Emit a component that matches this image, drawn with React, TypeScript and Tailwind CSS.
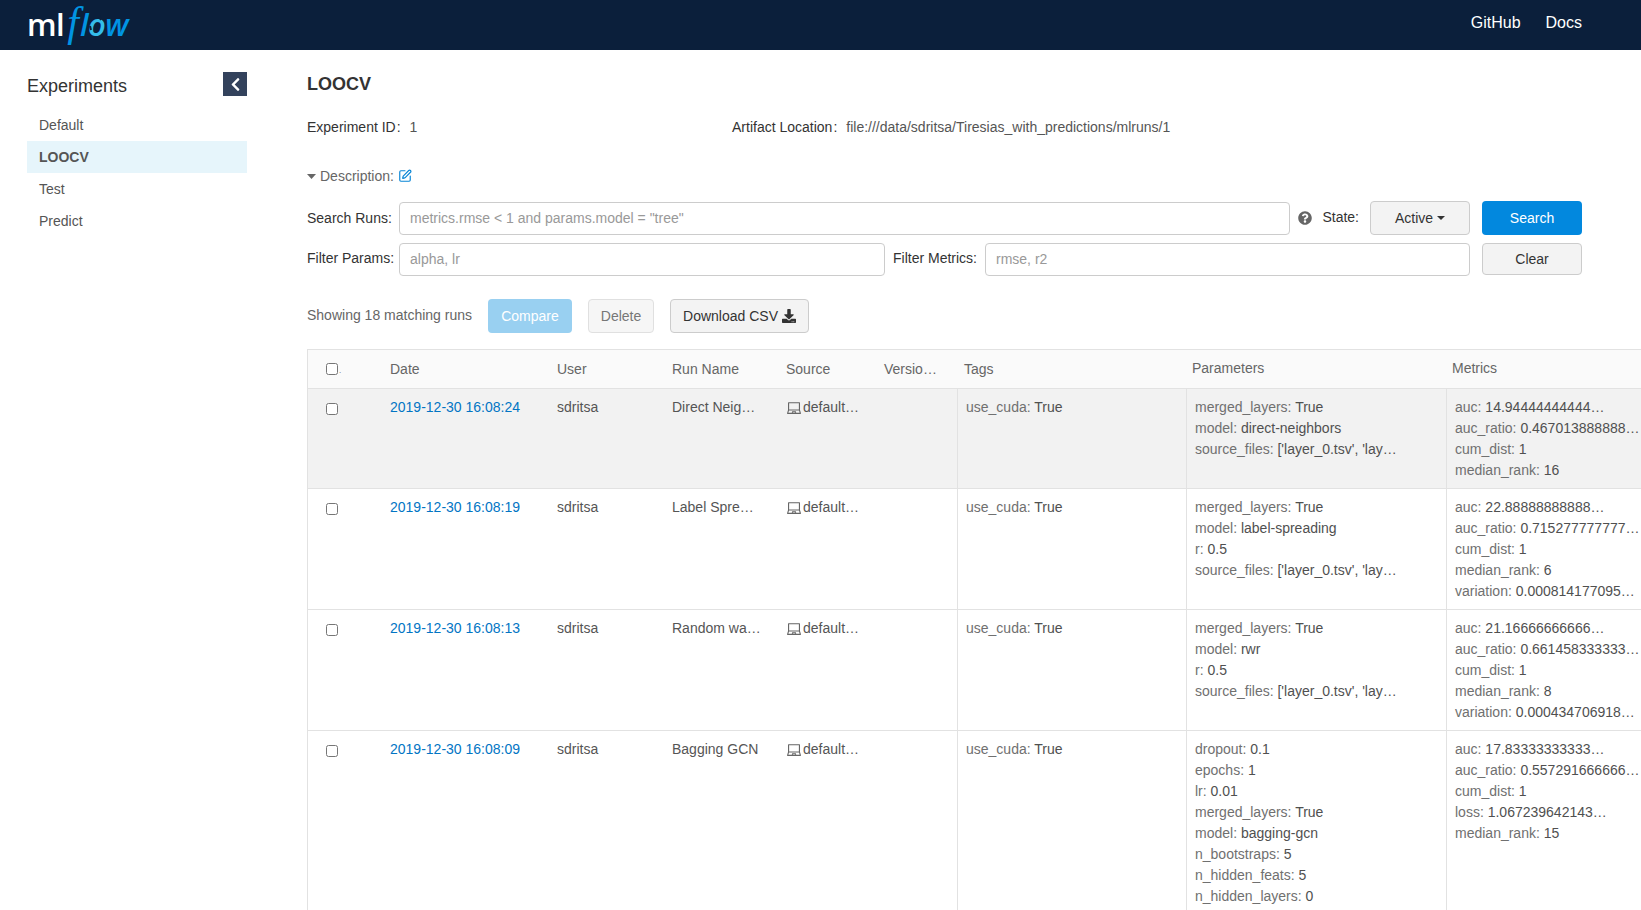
import React from "react";
import { FaChevronLeft, FaDownload, FaQuestionCircle } from "react-icons/fa";
import { AiOutlineLaptop } from "react-icons/ai";
import { SquarePen } from "lucide-react";

type Run = { date: string; name: string; params: [string, string][]; metrics: [string, string][]; hover?: boolean };

const files = "['layer_0.tsv', 'lay…";
const runs: Run[] = [
  {
    date: "2019-12-30 16:08:24",
    name: "Direct Neig…",
    hover: true,
    params: [["merged_layers", "True"], ["model", "direct-neighbors"], ["source_files", files]],
    metrics: [["auc", "14.94444444444…"], ["auc_ratio", "0.467013888888…"], ["cum_dist", "1"], ["median_rank", "16"]],
  },
  {
    date: "2019-12-30 16:08:19",
    name: "Label Spre…",
    params: [["merged_layers", "True"], ["model", "label-spreading"], ["r", "0.5"], ["source_files", files]],
    metrics: [["auc", "22.88888888888…"], ["auc_ratio", "0.715277777777…"], ["cum_dist", "1"], ["median_rank", "6"], ["variation", "0.000814177095…"]],
  },
  {
    date: "2019-12-30 16:08:13",
    name: "Random wa…",
    params: [["merged_layers", "True"], ["model", "rwr"], ["r", "0.5"], ["source_files", files]],
    metrics: [["auc", "21.16666666666…"], ["auc_ratio", "0.661458333333…"], ["cum_dist", "1"], ["median_rank", "8"], ["variation", "0.000434706918…"]],
  },
  {
    date: "2019-12-30 16:08:09",
    name: "Bagging GCN",
    params: [["dropout", "0.1"], ["epochs", "1"], ["lr", "0.01"], ["merged_layers", "True"], ["model", "bagging-gcn"], ["n_bootstraps", "5"], ["n_hidden_feats", "5"], ["n_hidden_layers", "0"]],
    metrics: [["auc", "17.83333333333…"], ["auc_ratio", "0.557291666666…"], ["cum_dist", "1"], ["loss", "1.067239642143…"], ["median_rank", "15"]],
  },
];

const GRID = "grid grid-cols-[74px_167px_115px_114px_98px_81px_229px_260px_1fr]";

function KV({ items }: { items: [string, string][] }) {
  return (
    <>
      {items.map(([k, v]) => (
        <div key={k} className="h-[21px] leading-[21px] whitespace-nowrap">
          <span className="text-[#707070]">{k}: </span>
          <span className="text-[#505050]">{v}</span>
        </div>
      ))}
    </>
  );
}

function Logo() {
  return (
    <div className="relative flex items-baseline h-[50px] w-[110px] font-['Open_Sans',sans-serif] select-none">
      <span className="text-white text-[31px] font-semibold leading-[44px] tracking-[-0.5px]">ml</span>
      <span className="text-[#0194e2] text-[42px] italic leading-[44px] font-['Liberation_Serif',serif] ml-[3px] mr-[1px]">f</span>
      <span className="text-[#0194e2] text-[31px] italic font-semibold leading-[44px] tracking-[-0.5px]">l</span>
      <span className="text-[#35bdea] text-[31px] italic font-semibold leading-[44px] tracking-[-0.5px]">o</span>
      <span className="text-[#0194e2] text-[31px] italic font-semibold leading-[44px] tracking-[-0.5px]">w</span>
      <svg width="20" height="20" viewBox="0 0 20 20" className="absolute left-[58px] top-[13px]">
        <path d="M14 3l2 4M5 13l1 4" stroke="#0b1f3b" strokeWidth="2" fill="none" />
      </svg>
    </div>
  );
}

export default function App() {
  return (
    <div className="w-[1641px] h-[910px] overflow-hidden bg-white text-[14px] font-['Liberation_Sans',Arial,sans-serif] flex flex-col">
      <header className="h-[50px] shrink-0 bg-[#0b1f3b] flex items-start justify-between pl-[27px] pr-[59px]">
        <Logo />
        <nav className="flex gap-[25px] text-white text-[16px] leading-[45px]">
          <span>GitHub</span>
          <span>Docs</span>
        </nav>
      </header>
      <div className="flex flex-1 min-h-0">
        <aside className="w-[220px] ml-[27px] shrink-0 text-[#555]">
          <div className="flex items-center justify-between mt-[22px] h-[24px]">
            <span className="text-[18px] text-[#333] mt-[4px]">Experiments</span>
            <span className="w-[24px] h-[24px] bg-[#33425c] flex items-center justify-center text-white">
              <FaChevronLeft size={15} />
            </span>
          </div>
          <ul className="mt-[13px]">
            <li className="h-[32px] leading-[32px] pl-[12px]">Default</li>
            <li className="h-[32px] leading-[32px] pl-[12px] bg-[#e6f5fb] font-bold">LOOCV</li>
            <li className="h-[32px] leading-[32px] pl-[12px]">Test</li>
            <li className="h-[32px] leading-[32px] pl-[12px]">Predict</li>
          </ul>
        </aside>
        <main className="flex-1 min-w-0 pl-[60px] overflow-hidden">
          <h1 className="mt-[23px] text-[18px] leading-[22px] font-bold text-[#333]">LOOCV</h1>
          <div className="mt-[22px] flex h-[20px] leading-[20px] text-[#333]">
            <div className="w-[425px]">
              Experiment ID<span className="ml-[1px]">:</span>
              <span className="ml-[9px] text-[#555]">1</span>
            </div>
            <div>
              Artifact Location<span className="ml-[1px]">:</span>
              <span className="ml-[9px] text-[#555]">file:///data/sdritsa/Tiresias_with_predictions/mlruns/1</span>
            </div>
          </div>
          <div className="mt-[29px] flex items-center h-[20px] text-[#666]">
            <svg width="9" height="5" viewBox="0 0 9 5" className="mr-[4px]">
              <path d="M0 0h9L4.500 5z" fill="#666" />
            </svg>
            <span>Description:</span>
            <SquarePen size={14} strokeWidth={2} className="ml-[4px] text-[#0a86d6]" />
          </div>

          <div className="w-[1275px] mt-[15px] flex items-center h-[34px]">
            <span className="w-[92px] shrink-0 text-[#333]">Search Runs:</span>
            <div className="flex-1 h-[33px] border border-[#ccc] rounded-[4px] px-[10px] leading-[31px] text-[#999]">
              metrics.rmse &lt; 1 and params.model = "tree"
            </div>
            <FaQuestionCircle size={14} className="ml-[8px] text-[#666]" />
            <span className="ml-[10px] text-[#333] mb-[2px]">State:</span>
            <button className="ml-[11px] w-[100px] h-[34px] border border-[#ccc] rounded-[4px] bg-[#f3f3f3] text-[#333] flex items-center justify-center">
              Active
              <svg width="8" height="4" viewBox="0 0 8 4" className="ml-[4px]">
                <path d="M0 0h8L4 4z" fill="#333" />
              </svg>
            </button>
            <button className="ml-[12px] w-[100px] h-[34px] rounded-[4px] bg-[#0288de] text-white">Search</button>
          </div>

          <div className="w-[1275px] mt-[8px] flex items-start">
            <span className="w-[92px] shrink-0 text-[#333] leading-[30px]">Filter Params:</span>
            <div className="w-[486px] h-[33px] border border-[#ccc] rounded-[4px] px-[10px] leading-[31px] text-[#999]">
              alpha, lr
            </div>
            <span className="w-[100px] pl-[8px] shrink-0 text-[#333] leading-[30px]">Filter Metrics:</span>
            <div className="w-[485px] h-[33px] border border-[#ccc] rounded-[4px] px-[10px] leading-[31px] text-[#999]">
              rmse, r2
            </div>
            <button className="ml-[12px] w-[100px] h-[32px] border border-[#ccc] rounded-[4px] bg-[#f3f3f3] text-[#333]">Clear</button>
          </div>

          <div className="mt-[23px] flex items-center h-[34px]">
            <span className="w-[181px] text-[#666] mb-[2px]">Showing 18 matching runs</span>
            <button className="w-[84px] h-[34px] rounded-[4px] bg-[#99d0f1] text-white">Compare</button>
            <button className="ml-[16px] w-[66px] h-[34px] border border-[#e0e0e0] rounded-[4px] bg-[#f6f6f6] text-[#777]">Delete</button>
            <button className="ml-[16px] w-[139px] h-[34px] border border-[#ccc] rounded-[4px] bg-[#f3f3f3] text-[#333] flex items-center justify-center">
              Download CSV
              <FaDownload size={14} className="ml-[4px]" />
            </button>
          </div>

          <div className="mt-[16px] border-l border-t border-[#e2e2e2]">
            <div className={`${GRID} h-[39px] bg-[#fafafa] border-b border-[#e2e2e2] text-[#666] leading-[38px]`}>
              <div className="pl-[18px] flex items-center">
                <input type="checkbox" className="w-[12px] h-[12px] m-0" />
                <span className="text-[8px] leading-[8px] mt-[4px] ml-[1px]">.</span>
              </div>
              <div className="pl-[8px]">Date</div>
              <div className="pl-[8px]">User</div>
              <div className="pl-[8px]">Run Name</div>
              <div className="pl-[8px]">Source</div>
              <div className="pl-[8px]">Versio…</div>
              <div className="pl-[7px]">Tags</div>
              <div className="pl-[6px] leading-[36px]">Parameters</div>
              <div className="pl-[6px] leading-[36px]">Metrics</div>
            </div>
            {runs.map((r) => (
              <div key={r.date} className={`${GRID} border-b border-[#e2e2e2] ${r.hover ? "bg-[#f2f2f2]" : "bg-white"}`}>
                <div className="pl-[18px] pt-[14px]">
                  <input type="checkbox" className="block w-[12px] h-[12px] m-0" />
                </div>
                <div className="pl-[8px] pt-[8px] leading-[21px] text-[#0275c4]">{r.date}</div>
                <div className="pl-[8px] pt-[8px] leading-[21px] text-[#555]">sdritsa</div>
                <div className="pl-[8px] pt-[8px] leading-[21px] text-[#555] whitespace-nowrap">{r.name}</div>
                <div className="pl-[8px] pt-[8px] leading-[21px] text-[#555] flex items-start">
                  <AiOutlineLaptop size={16} className="mt-[3px] mr-[1px] text-[#666]" />
                  default…
                </div>
                <div />
                <div className="border-l border-[#e2e2e2] pl-[8px] pt-[8px] pb-[7px] leading-[21px]">
                  <span className="text-[#707070]">use_cuda: </span>
                  <span className="text-[#505050]">True</span>
                </div>
                <div className="border-l border-[#e2e2e2] pl-[8px] pt-[8px] pb-[7px]">
                  <KV items={r.params} />
                </div>
                <div className="border-l border-[#e2e2e2] pl-[8px] pt-[8px] pb-[7px]">
                  <KV items={r.metrics} />
                </div>
              </div>
            ))}
          </div>
        </main>
      </div>
    </div>
  );
}
